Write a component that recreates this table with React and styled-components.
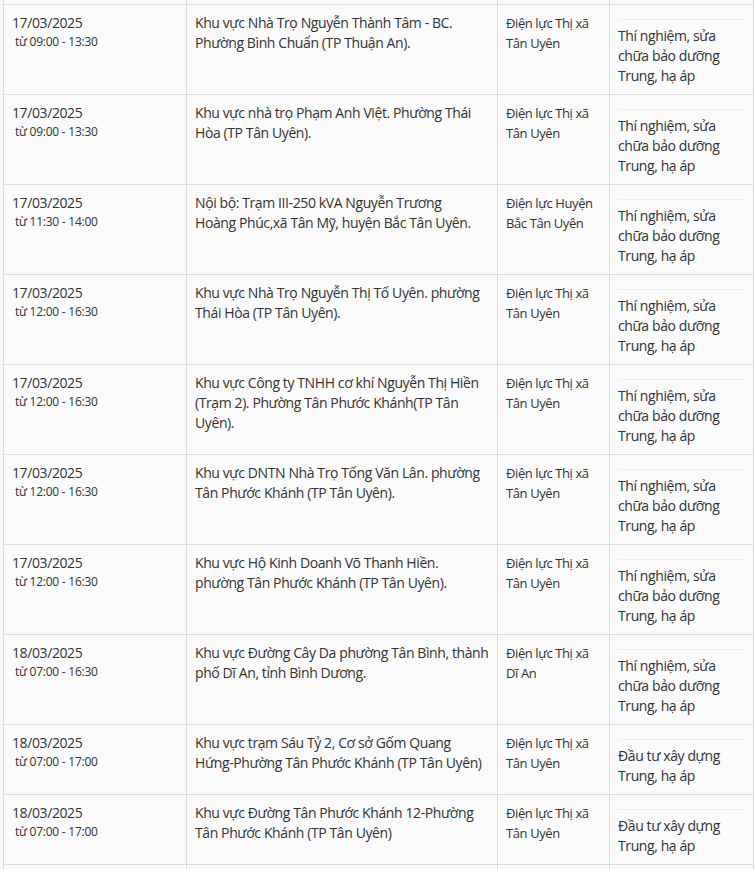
import React from "react";
import styled, { createGlobalStyle } from "styled-components";

const Global = createGlobalStyle`
  html, body { margin: 0; padding: 0; background: #fafafa; }
  body { font-family: "Open Sans", "Noto Sans", sans-serif; color: #333; }
`;

const Page = styled.div`
  padding: 0 3px;
  height: 869px;
  overflow: hidden;
`;

const Table = styled.table`
  width: 750px;
  border-collapse: collapse;
  table-layout: fixed;
  background: #fafafa;
`;

const Row = styled.tr`
  height: ${(p) => (p.$stub ? "4px" : "auto")};
`;

const Cell = styled.td`
  border: 1px solid #dddddd;
  border-top: ${(p) => (p.$stub ? "none" : "1px solid #dddddd")};
  vertical-align: top;
  padding: ${(p) => (p.$stub ? "0" : "8px 9px 8px 8px")};
  font-size: ${(p) => p.$size || 14}px;
  line-height: 20px;
  letter-spacing: -0.4px;
  white-space: nowrap;
  color: #333;
`;

const DateText = styled.div`
  font-size: 14px;
  line-height: 20px;
`;

const TimeText = styled.div`
  font-size: 12px;
  line-height: 18px;
  letter-spacing: -0.25px;
  padding-left: 3px;
`;

const Divider = styled.div`
  border-top: 1px solid #ebebeb;
  margin-top: 6px;
  margin-bottom: 6px;
`;

const rows = [
  ["17/03/2025", "09:00 - 13:30", ["Khu vực Nhà Trọ Nguyễn Thành Tâm - BC.", "Phường Bình Chuẩn (TP Thuận An)."], ["Điện lực Thị xã", "Tân Uyên"], "tn"],
  ["17/03/2025", "09:00 - 13:30", ["Khu vực nhà trọ Phạm Anh Việt. Phường Thái", "Hòa (TP Tân Uyên)."], ["Điện lực Thị xã", "Tân Uyên"], "tn"],
  ["17/03/2025", "11:30 - 14:00", ["Nội bộ: Trạm III-250 kVA Nguyễn Trương", "Hoàng Phúc,xã Tân Mỹ, huyện Bắc Tân Uyên."], ["Điện lực Huyện", "Bắc Tân Uyên"], "tn"],
  ["17/03/2025", "12:00 - 16:30", ["Khu vực Nhà Trọ Nguyễn Thị Tố Uyên. phường", "Thái Hòa (TP Tân Uyên)."], ["Điện lực Thị xã", "Tân Uyên"], "tn"],
  ["17/03/2025", "12:00 - 16:30", ["Khu vực Công ty TNHH cơ khí Nguyễn Thị Hiền", "(Trạm 2). Phường Tân Phước Khánh(TP Tân", "Uyên)."], ["Điện lực Thị xã", "Tân Uyên"], "tn"],
  ["17/03/2025", "12:00 - 16:30", ["Khu vực DNTN Nhà Trọ Tống Văn Lân. phường", "Tân Phước Khánh (TP Tân Uyên)."], ["Điện lực Thị xã", "Tân Uyên"], "tn"],
  ["17/03/2025", "12:00 - 16:30", ["Khu vực Hộ Kinh Doanh Võ Thanh Hiền.", "phường Tân Phước Khánh (TP Tân Uyên)."], ["Điện lực Thị xã", "Tân Uyên"], "tn"],
  ["18/03/2025", "07:00 - 16:30", ["Khu vực Đường Cây Da phường Tân Bình, thành", "phố Dĩ An, tỉnh Bình Dương."], ["Điện lực Thị xã", "Dĩ An"], "tn"],
  ["18/03/2025", "07:00 - 17:00", ["Khu vực trạm Sáu Tỷ 2, Cơ sở Gốm Quang", "Hứng-Phường Tân Phước Khánh (TP Tân Uyên)"], ["Điện lực Thị xã", "Tân Uyên"], "dt"],
  ["18/03/2025", "07:00 - 17:00", ["Khu vực Đường Tân Phước Khánh 12-Phường", "Tân Phước Khánh (TP Tân Uyên)"], ["Điện lực Thị xã", "Tân Uyên"], "dt"],
  ["", "", [""], [""], "none"],
];

const reasons = {
  tn: ["Thí nghiệm, sửa", "chữa bảo dưỡng", "Trung, hạ áp"],
  dt: ["Đầu tư xây dựng", "Trung, hạ áp"],
  none: [""],
};

const Lines = ({ lines }) =>
  lines.map((l, i) => (
    <React.Fragment key={i}>
      {l}
      {i < lines.length - 1 && <br />}
    </React.Fragment>
  ));

export default function App() {
  return (
    <Page>
      <Global />
      <Table>
        <colgroup>
          <col style={{ width: 183 }} />
          <col style={{ width: 311 }} />
          <col style={{ width: 112 }} />
          <col style={{ width: 144 }} />
        </colgroup>
        <tbody>
          <Row $stub>
            <Cell $stub />
            <Cell $stub />
            <Cell $stub />
            <Cell $stub />
          </Row>
          {rows.map(([date, time, area, unit, reason], i) => (
            <Row key={i}>
              <Cell>
                <DateText>{date || "\u00a0"}</DateText>
                <TimeText>{time ? `từ ${time}` : "\u00a0"}</TimeText>
              </Cell>
              <Cell>
                <Lines lines={area} />
              </Cell>
              <Cell $size={13}>
                <Lines lines={unit} />
              </Cell>
              <Cell>
                <Divider />
                <Lines lines={reasons[reason]} />
              </Cell>
            </Row>
          ))}
        </tbody>
      </Table>
    </Page>
  );
}
